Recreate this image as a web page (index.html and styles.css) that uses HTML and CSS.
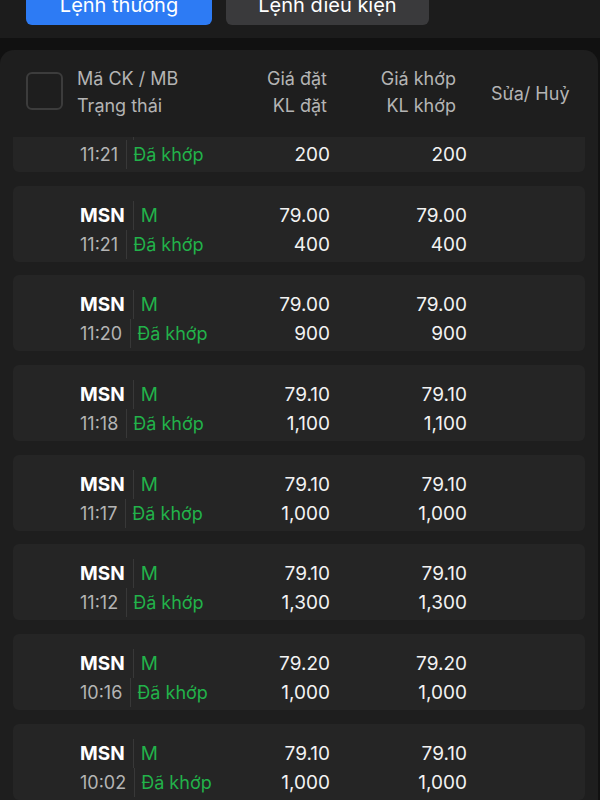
FILE: index.html
```html
<!DOCTYPE html>
<html lang="vi">
<head>
<meta charset="UTF-8">
<title>Sổ lệnh</title>
<link rel="stylesheet" href="styles.css">
</head>
<body>
<div class="tabs">
    <button class="tab tab-active">Lệnh thường</button>
    <button class="tab">Lệnh điều kiện</button>
</div>

<div class="panel">
    <div class="head">
        <span class="check"></span>
        <div class="hcol hcol-code">Mã CK / MB<br>Trạng thái</div>
        <div class="hcol hcol-price">Giá đặt<br>KL đặt</div>
        <div class="hcol hcol-match">Giá khớp<br>KL khớp</div>
        <div class="hcol hcol-edit">Sửa/ Huỷ</div>
    </div>

    <div class="list">
        <div class="list-inner">
            <div class="order">
                <div class="code">
                    <div class="line"><b>MSN</b><span class="sep side">M</span></div>
                    <div class="line"><span class="time">11:21</span><span class="sep status">Đã khớp</span></div>
                </div>
                <div class="num">79.00<br>200</div>
                <div class="num num-match">79.00<br>200</div>
            </div>
            <div class="order">
                <div class="code">
                    <div class="line"><b>MSN</b><span class="sep side">M</span></div>
                    <div class="line"><span class="time">11:21</span><span class="sep status">Đã khớp</span></div>
                </div>
                <div class="num">79.00<br>400</div>
                <div class="num num-match">79.00<br>400</div>
            </div>
            <div class="order">
                <div class="code">
                    <div class="line"><b>MSN</b><span class="sep side">M</span></div>
                    <div class="line"><span class="time">11:20</span><span class="sep status">Đã khớp</span></div>
                </div>
                <div class="num">79.00<br>900</div>
                <div class="num num-match">79.00<br>900</div>
            </div>
            <div class="order">
                <div class="code">
                    <div class="line"><b>MSN</b><span class="sep side">M</span></div>
                    <div class="line"><span class="time">11:18</span><span class="sep status">Đã khớp</span></div>
                </div>
                <div class="num">79.10<br>1,100</div>
                <div class="num num-match">79.10<br>1,100</div>
            </div>
            <div class="order">
                <div class="code">
                    <div class="line"><b>MSN</b><span class="sep side">M</span></div>
                    <div class="line"><span class="time">11:17</span><span class="sep status">Đã khớp</span></div>
                </div>
                <div class="num">79.10<br>1,000</div>
                <div class="num num-match">79.10<br>1,000</div>
            </div>
            <div class="order">
                <div class="code">
                    <div class="line"><b>MSN</b><span class="sep side">M</span></div>
                    <div class="line"><span class="time">11:12</span><span class="sep status">Đã khớp</span></div>
                </div>
                <div class="num">79.10<br>1,300</div>
                <div class="num num-match">79.10<br>1,300</div>
            </div>
            <div class="order">
                <div class="code">
                    <div class="line"><b>MSN</b><span class="sep side">M</span></div>
                    <div class="line"><span class="time">10:16</span><span class="sep status">Đã khớp</span></div>
                </div>
                <div class="num">79.20<br>1,000</div>
                <div class="num num-match">79.20<br>1,000</div>
            </div>
            <div class="order">
                <div class="code">
                    <div class="line"><b>MSN</b><span class="sep side">M</span></div>
                    <div class="line"><span class="time">10:02</span><span class="sep status">Đã khớp</span></div>
                </div>
                <div class="num">79.10<br>1,000</div>
                <div class="num num-match">79.10<br>1,000</div>
            </div>
        </div>
    </div>
</div>
</body>
</html>
```

FILE: styles.css
```css
body {
    margin: 0;
    background-color: #111111;
    font-family: Inter, "Noto Sans", sans-serif;
    color: #f0f0f0;
    height: 800px;
    overflow: hidden;
}

/* top tab bar, buttons are cut by the top of the screen */
.tabs {
    height: 38px;
    box-sizing: border-box;
    display: flex;
    align-items: flex-end;
    gap: 14px;
    padding: 0 0 13px 26px;
    background-color: #1c1c1c;
}

.tab {
    flex: none;
    width: 203px;
    height: 40px;
    border: none;
    border-radius: 6px;
    background-color: #3a3a3c;
    color: #ffffff;
    font-family: Inter, sans-serif;
    font-size: 20px;
    font-weight: 400;
    padding: 0;
}

.tab-active {
    width: 186px;
    background-color: #2d7bf4;
}

.panel {
    margin-top: 12px;
    margin-right: 2px;
    background-color: #1e1e1e;
    border-radius: 14px 14px 0 0;
}

.head {
    display: flex;
    align-items: center;
    height: 87px;
    padding-left: 26px;
    color: #b4b4b4;
    font-size: 18px;
    line-height: 27px;
}

.check {
    flex: none;
    width: 33px;
    height: 34px;
    border: 2px solid #3c3c3c;
    border-radius: 6px;
    margin-right: 14px;
    margin-top: -5px;
}

.hcol {
    flex: none;
}

.hcol-code {
    width: 150px;
    margin-top: -3px;
}

.hcol-price {
    width: 100px;
    text-align: right;
    margin-top: -3px;
}

.hcol-match {
    width: 129px;
    text-align: right;
    margin-top: -3px;
}

.hcol-edit {
    margin-left: 35px;
}

.list {
    height: 663px;
    overflow: hidden;
}

/* list is scrolled, first card is half hidden */
.list-inner {
    margin-top: -41px;
    display: flex;
    flex-direction: column;
    gap: 13.7px;
}

.order {
    flex: none;
    margin: 0 13px;
    height: 76px;
    box-sizing: border-box;
    padding: 15px 0 3px 67px;
    background-color: #252525;
    border-radius: 6px;
    display: flex;
    font-size: 19px;
    line-height: 29px;
}

.code {
    width: 150px;
}

.line {
    display: flex;
}

.line b {
    font-weight: 700;
    color: #ffffff;
    padding-right: 8px;
}

.time {
    color: #b4b4b4;
    font-size: 18px;
    padding-right: 8px;
}

.sep {
    border-left: 1px solid #383838;
    padding-left: 7px;
    color: #22b24a;
}

.status {
    font-size: 18px;
    padding-left: 6px;
}

.num {
    width: 100px;
    text-align: right;
    color: #f2f2f2;
}

.num-match {
    width: 137px;
}
```
